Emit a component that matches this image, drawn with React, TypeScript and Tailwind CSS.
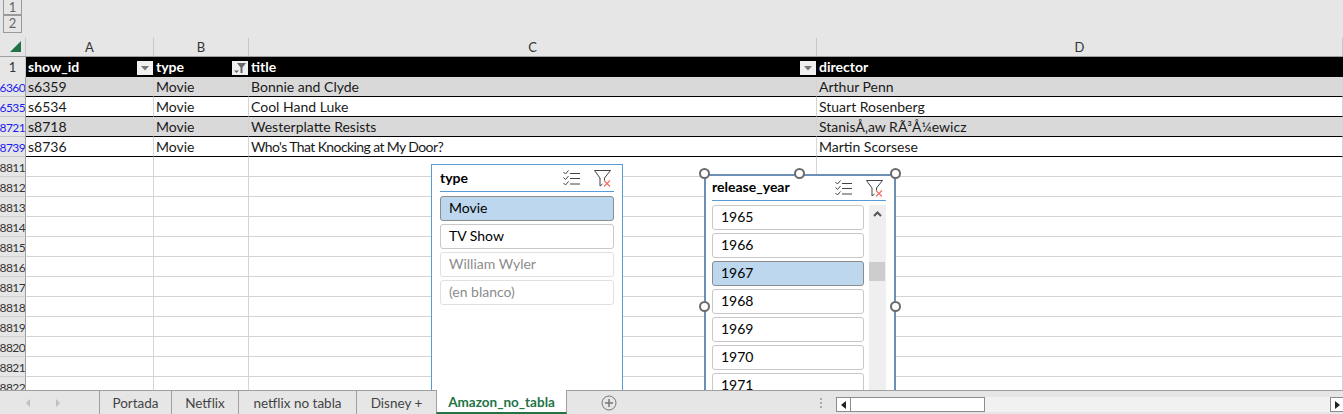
const font = "font-['Lato','Open_Sans',sans-serif]"

const headerCells = [
  { label: 'show_id', width: 'w-[128px]', filtered: false },
  { label: 'type', width: 'w-[95px]', filtered: true },
  { label: 'title', width: 'w-[568px]', filtered: false },
  { label: 'director', width: 'flex-1', filtered: null }
]

const dataRows = [
  { num: '6360', cells: ['s6359', 'Movie', 'Bonnie and Clyde', 'Arthur Penn'], shaded: true },
  { num: '6535', cells: ['s6534', 'Movie', 'Cool Hand Luke', 'Stuart Rosenberg'], shaded: false },
  { num: '8721', cells: ['s8718', 'Movie', 'Westerplatte Resists', 'StanisÅ‚aw RÃ³Å¼ewicz'], shaded: true },
  { num: '8739', cells: ['s8736', 'Movie', "Who's That Knocking at My Door?", 'Martin Scorsese'], shaded: false }
]

const emptyRows = ['8811', '8812', '8813', '8814', '8815', '8816', '8817', '8818', '8819', '8820', '8821', '8822']
const colWidths = ['w-[128px]', 'w-[95px]', 'w-[568px]', 'flex-1']

const FilterButton = ({ filtered }: { filtered: boolean }) => (
  <span className="absolute right-[1px] top-[4px] flex h-[14px] w-[16px] items-center justify-center bg-[#f0f0f0]">
    {filtered ? (
      <svg width="16" height="14" viewBox="0 0 16 14">
        <path d="M5 2h9L10.500 6.500V12H8.500V6.500z" fill="#666" />
        <path d="M2 9.500h5L4.500 12z" fill="#666" />
      </svg>
    ) : (
      <svg width="10" height="6" viewBox="0 0 10 6">
        <path d="M1 1h8L5 5.500z" fill="#777" />
      </svg>
    )}
  </span>
)

const SelectAllIcon = () => (
  <svg width="17" height="16" viewBox="0 0 17 16" fill="none" stroke="#444" strokeWidth="1">
    <path d="M0.500 2l2 2 3-3.500M0.500 7.500l2 2 3-3.500M0.500 13l2 2 3-3.500" />
    <path d="M7 3.500h10M7 8.500h10M7 14h10" />
  </svg>
)

const ClearFilterIcon = () => (
  <svg width="17" height="17" viewBox="0 0 17 17" fill="none">
    <path d="M10.500 10.500V8l6-7.500H0.500L6 8v8l2.500-2" stroke="#444" />
    <path d="M10 10.500l6 6M16 10.500l-6 6" stroke="#f0706a" strokeWidth="1.200" />
  </svg>
)

const SlicerItem = ({ label, state }: { label: string; state: 'on' | 'off' | 'empty' }) => (
  <div
    className={
      'flex h-[25px] shrink-0 items-center rounded-[3px] border pb-[3px] pl-[8px] text-[14px] ' +
      (state === 'on'
        ? 'border-[#8c8c8c] bg-[#bdd7ee] text-black'
        : state === 'off'
          ? 'border-[#c8c8c8] bg-white text-black'
          : 'border-[#e0e0e0] bg-white text-[#8c8c8c]')
    }
  >
    {label}
  </div>
)

const Handle = ({ className }: { className: string }) => (
  <span className={'absolute h-[11px] w-[11px] rounded-full border-2 border-[#6b6b6b] bg-white ' + className} />
)

export default function App() {
  return (
    <div className={`${font} relative flex h-[414px] w-[1343px] flex-col overflow-hidden bg-white text-[14px] text-black`}>
      {/* outline level buttons */}
      <div className="flex h-[38px] shrink-0 flex-col bg-[#e6e6e6] pl-[3px]">
        <div className="flex h-[15px] w-[19px] items-end justify-center border border-t-0 border-[#9a9a9a] text-[13px] leading-[14px] text-[#666]">1</div>
        <div className="flex h-[18px] w-[19px] items-center justify-center border border-[#9a9a9a] text-[13px] text-[#666]">2</div>
      </div>

      {/* column letters */}
      <div className="flex h-[19px] shrink-0 border-b border-[#9f9f9f] bg-[#e6e6e6] text-[13px] text-[#333]">
        <div className="relative w-[26px] border-r border-[#c6c6c6]">
          <span className="absolute bottom-[4px] right-[4px] h-0 w-0 border-b-[11px] border-l-[11px] border-b-[#217346] border-l-transparent" />
        </div>
        {['A', 'B', 'C', 'D'].map((col, i) => (
          <div key={col} className={`${colWidths[i]} flex items-center justify-center border-r border-[#c6c6c6] pt-[2px]`}>{col}</div>
        ))}
      </div>

      {/* header row */}
      <div className="flex h-[20px] shrink-0 bg-black font-bold text-white">
        <div className="flex w-[26px] items-center justify-center border-r border-[#c6c6c6] bg-[#e6e6e6] pt-px text-[13px] font-normal text-[#333]">1</div>
        {headerCells.map((cell) => (
          <div key={cell.label} className={`${cell.width} relative flex items-center pb-[2px] pl-[2px]`}>
            {cell.label}
            {cell.filtered !== null && <FilterButton filtered={cell.filtered} />}
          </div>
        ))}
      </div>

      {/* filtered rows */}
      {dataRows.map((row) => (
        <div key={row.num} className="flex h-[20px] shrink-0">
          <div className="flex w-[26px] items-center justify-end overflow-hidden border-b border-r border-b-[#c6c6c6] border-r-[#9f9f9f] bg-[#e6e6e6] pt-[3px] text-[12px] tracking-[-0.6px] text-[#1c1cf0]">{row.num}</div>
          {row.cells.map((text, i) => (
            <div
              key={i}
              className={`${colWidths[i]} flex items-center whitespace-nowrap border-b border-r border-b-black border-r-[#d4d4d4] pl-[2px] text-[#1a1a1a] ${row.shaded ? 'bg-[#d9d9d9]' : 'bg-white'} ${text.startsWith('Who') ? 'tracking-[-0.6px]' : ''}`}
            >
              {text}
            </div>
          ))}
        </div>
      ))}

      {/* empty grid */}
      {emptyRows.map((num) => (
        <div key={num} className="flex h-[20px] shrink-0">
          <div className="flex w-[26px] items-center justify-end overflow-hidden border-b border-r border-b-[#d0d0d0] border-r-[#9f9f9f] bg-[#e6e6e6] pt-[3px] text-[12px] tracking-[-0.6px] text-[#333]">{num}</div>
          {colWidths.map((w, i) => (
            <div key={i} className={`${w} border-b border-r border-[#d4d4d4]`} />
          ))}
        </div>
      ))}

      {/* type slicer */}
      <div className="absolute left-[431px] top-[164px] flex h-[240px] w-[192px] flex-col border border-[#5b9bd5] bg-white">
        <div className="mx-[8px] flex h-[27px] shrink-0 items-center justify-between border-b border-[#5b9bd5]">
          <span className="pb-[2px] font-bold">type</span>
          <div className="flex items-center gap-[14px] pr-[3px]">
            <SelectAllIcon />
            <ClearFilterIcon />
          </div>
        </div>
        <div className="mx-[8px] mt-[4px] flex flex-col gap-[3px]">
          <SlicerItem label="Movie" state="on" />
          <SlicerItem label="TV Show" state="off" />
          <SlicerItem label="William Wyler" state="empty" />
          <SlicerItem label="(en blanco)" state="empty" />
        </div>
      </div>

      {/* release_year slicer, selected */}
      <div className="absolute left-[704px] top-[174px] flex h-[236px] w-[192px] flex-col overflow-hidden border-2 border-[#6c8fb5] bg-white">
        <div className="ml-[6px] mr-[8px] flex h-[25px] shrink-0 items-center justify-between border-b border-[#5b9bd5]">
          <span className="pb-[3px] font-bold">release_year</span>
          <div className="flex items-center gap-[14px] pr-[3px]">
            <SelectAllIcon />
            <ClearFilterIcon />
          </div>
        </div>
        <div className="ml-[6px] mr-[8px] mt-[4px] flex gap-[5px]">
          <div className="flex w-[152px] flex-col gap-[3px]">
            <SlicerItem label="1965" state="off" />
            <SlicerItem label="1966" state="off" />
            <SlicerItem label="1967" state="on" />
            <SlicerItem label="1968" state="off" />
            <SlicerItem label="1969" state="off" />
            <SlicerItem label="1970" state="off" />
            <SlicerItem label="1971" state="off" />
          </div>
          <div className="relative h-[200px] w-[17px] bg-[#efefef]">
            <svg className="absolute left-[4px] top-[6px]" width="9" height="6" viewBox="0 0 9 6" fill="none" stroke="#555" strokeWidth="2">
              <path d="M1 5l3.500-3.500L8 5" />
            </svg>
            <span className="absolute left-0 top-[57px] h-[19px] w-[16px] bg-[#cdcdcd]" />
          </div>
        </div>
      </div>
      <Handle className="left-[699px] top-[168px]" />
      <Handle className="left-[794px] top-[168px]" />
      <Handle className="left-[890px] top-[168px]" />
      <Handle className="left-[699px] top-[301px]" />
      <Handle className="left-[890px] top-[301px]" />

      {/* sheet tabs */}
      <div className="absolute bottom-0 left-0 flex h-[24px] w-full border-t border-[#9f9f9f] bg-[#e6e6e6] text-[13.500px] text-[#444]">
        <div className="flex w-[100px] items-center justify-center gap-[24px] border-r border-[#9f9f9f] pr-[14px] text-[#c0c0c0]">
          <svg width="5" height="8" viewBox="0 0 5 8"><path d="M4 0v8L0 4z" fill="currentColor" /></svg>
          <svg width="5" height="8" viewBox="0 0 5 8"><path d="M1 0v8l4-4z" fill="currentColor" /></svg>
        </div>
        <div className="flex w-[72px] items-center justify-center border-r border-[#9f9f9f] pt-[2px]">Portada</div>
        <div className="flex w-[67px] items-center justify-center border-r border-[#9f9f9f] pt-[2px]">Netflix</div>
        <div className="flex w-[118px] items-center justify-center border-r border-[#9f9f9f] pt-[2px]">netflix no tabla</div>
        <div className="flex w-[79px] items-center justify-center pt-[2px]">Disney +</div>
        <div className="-mt-px flex w-[131px] items-center justify-center border-x border-b-2 border-x-[#9f9f9f] border-b-[#217346] bg-white pt-[2px] font-bold text-[#217346]">Amazon_no_tabla</div>
        <div className="flex w-[84px] items-center justify-center">
          <svg width="16" height="16" viewBox="0 0 16 16" fill="none" stroke="#777">
            <circle cx="8" cy="8" r="7" />
            <path d="M8 4v8M4 8h8" strokeWidth="1.500" />
          </svg>
        </div>
        <div className="ml-[160px] flex w-[20px] flex-col items-center justify-center gap-[2px]">
          <span className="h-[2px] w-[2px] bg-[#aaa]" />
          <span className="h-[2px] w-[2px] bg-[#aaa]" />
          <span className="h-[2px] w-[2px] bg-[#aaa]" />
        </div>
        <div className="ml-[5px] mt-[6px] flex h-[15px] flex-1 bg-[#f1f1f1]">
          <span className="flex w-[15px] items-center justify-center border border-[#8c8c8c] bg-white">
            <svg width="5" height="8" viewBox="0 0 5 8"><path d="M5 0v8L0 4z" fill="#222" /></svg>
          </span>
          <span className="w-[134px] border border-l-0 border-[#8c8c8c] bg-white" />
          <span className="flex-1" />
          <span className="flex w-[13px] items-center justify-center border border-r-0 border-[#8c8c8c] bg-white">
            <svg width="5" height="8" viewBox="0 0 5 8"><path d="M0 0v8l5-4z" fill="#222" /></svg>
          </span>
        </div>
      </div>
    </div>
  )
}
